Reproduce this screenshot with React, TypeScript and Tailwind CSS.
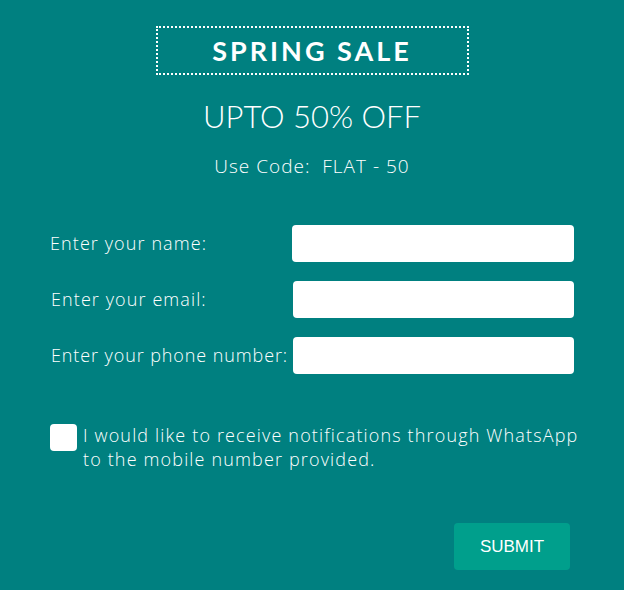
export default function App() {
  return (
    <div
      className="w-full h-[590px] bg-[#008080] text-white flex flex-col items-center"
      style={{ fontFamily: "'Open Sans', Lato, sans-serif" }}
    >
      <div className="mt-[26px] w-[313px] h-[49px] border-2 border-dotted border-white flex items-center justify-center">
        <h1
          className="text-[27px] font-bold tracking-[3px] leading-none"
          style={{ fontFamily: "Lato, sans-serif" }}
        >
          SPRING SALE
        </h1>
      </div>
      <p className="mt-[26px] text-[31px] font-light leading-none" style={{ fontFamily: "Lato, sans-serif" }}>
        UPTO 50% OFF
      </p>
      <p className="mt-[25px] text-[19px] font-light leading-none tracking-[1px]">
        Use Code:&nbsp;&nbsp;FLAT - 50
      </p>

      <form
        className="mt-[49px] w-[524px] flex flex-col gap-[19px] font-light tracking-[1.1px]"
        onSubmit={(e) => e.preventDefault()}
      >
        <label className="flex items-center justify-between">
          <span className="text-[18px]">Enter your name:</span>
          <input type="text" className="w-[282px] h-[37px] bg-white rounded-[4px] text-black px-2 outline-none" />
        </label>
        <label className="flex items-center justify-between">
          <span className="text-[18px] pl-px">Enter your email:</span>
          <input type="email" className="w-[281px] h-[37px] bg-white rounded-[4px] text-black px-2 outline-none" />
        </label>
        <label className="flex items-center justify-between">
          <span className="text-[18px] pl-px tracking-[0.9px]">Enter your phone number:</span>
          <input type="tel" className="w-[281px] h-[37px] bg-white rounded-[4px] text-black px-2 outline-none" />
        </label>

        <label className="mt-[30px] flex items-start gap-[6px]">
          <span className="mt-[1px] w-[27px] h-[27px] shrink-0 bg-white rounded-[4px]" />
          <span className="text-[18px] leading-[24px] whitespace-nowrap tracking-[1.15px]">
            I would like to receive notifications through WhatsApp
            <br />
            to the mobile number provided.
          </span>
        </label>

        <div className="mt-[33px] flex justify-end pr-[4px] tracking-normal">
          <button
            type="submit"
            className="w-[116px] h-[47px] bg-[#009f8c] rounded-[4px] text-[17px] font-normal text-white"
            style={{ fontFamily: "'Liberation Sans', Arial, sans-serif" }}
          >
            SUBMIT
          </button>
        </div>
      </form>
    </div>
  );
}
